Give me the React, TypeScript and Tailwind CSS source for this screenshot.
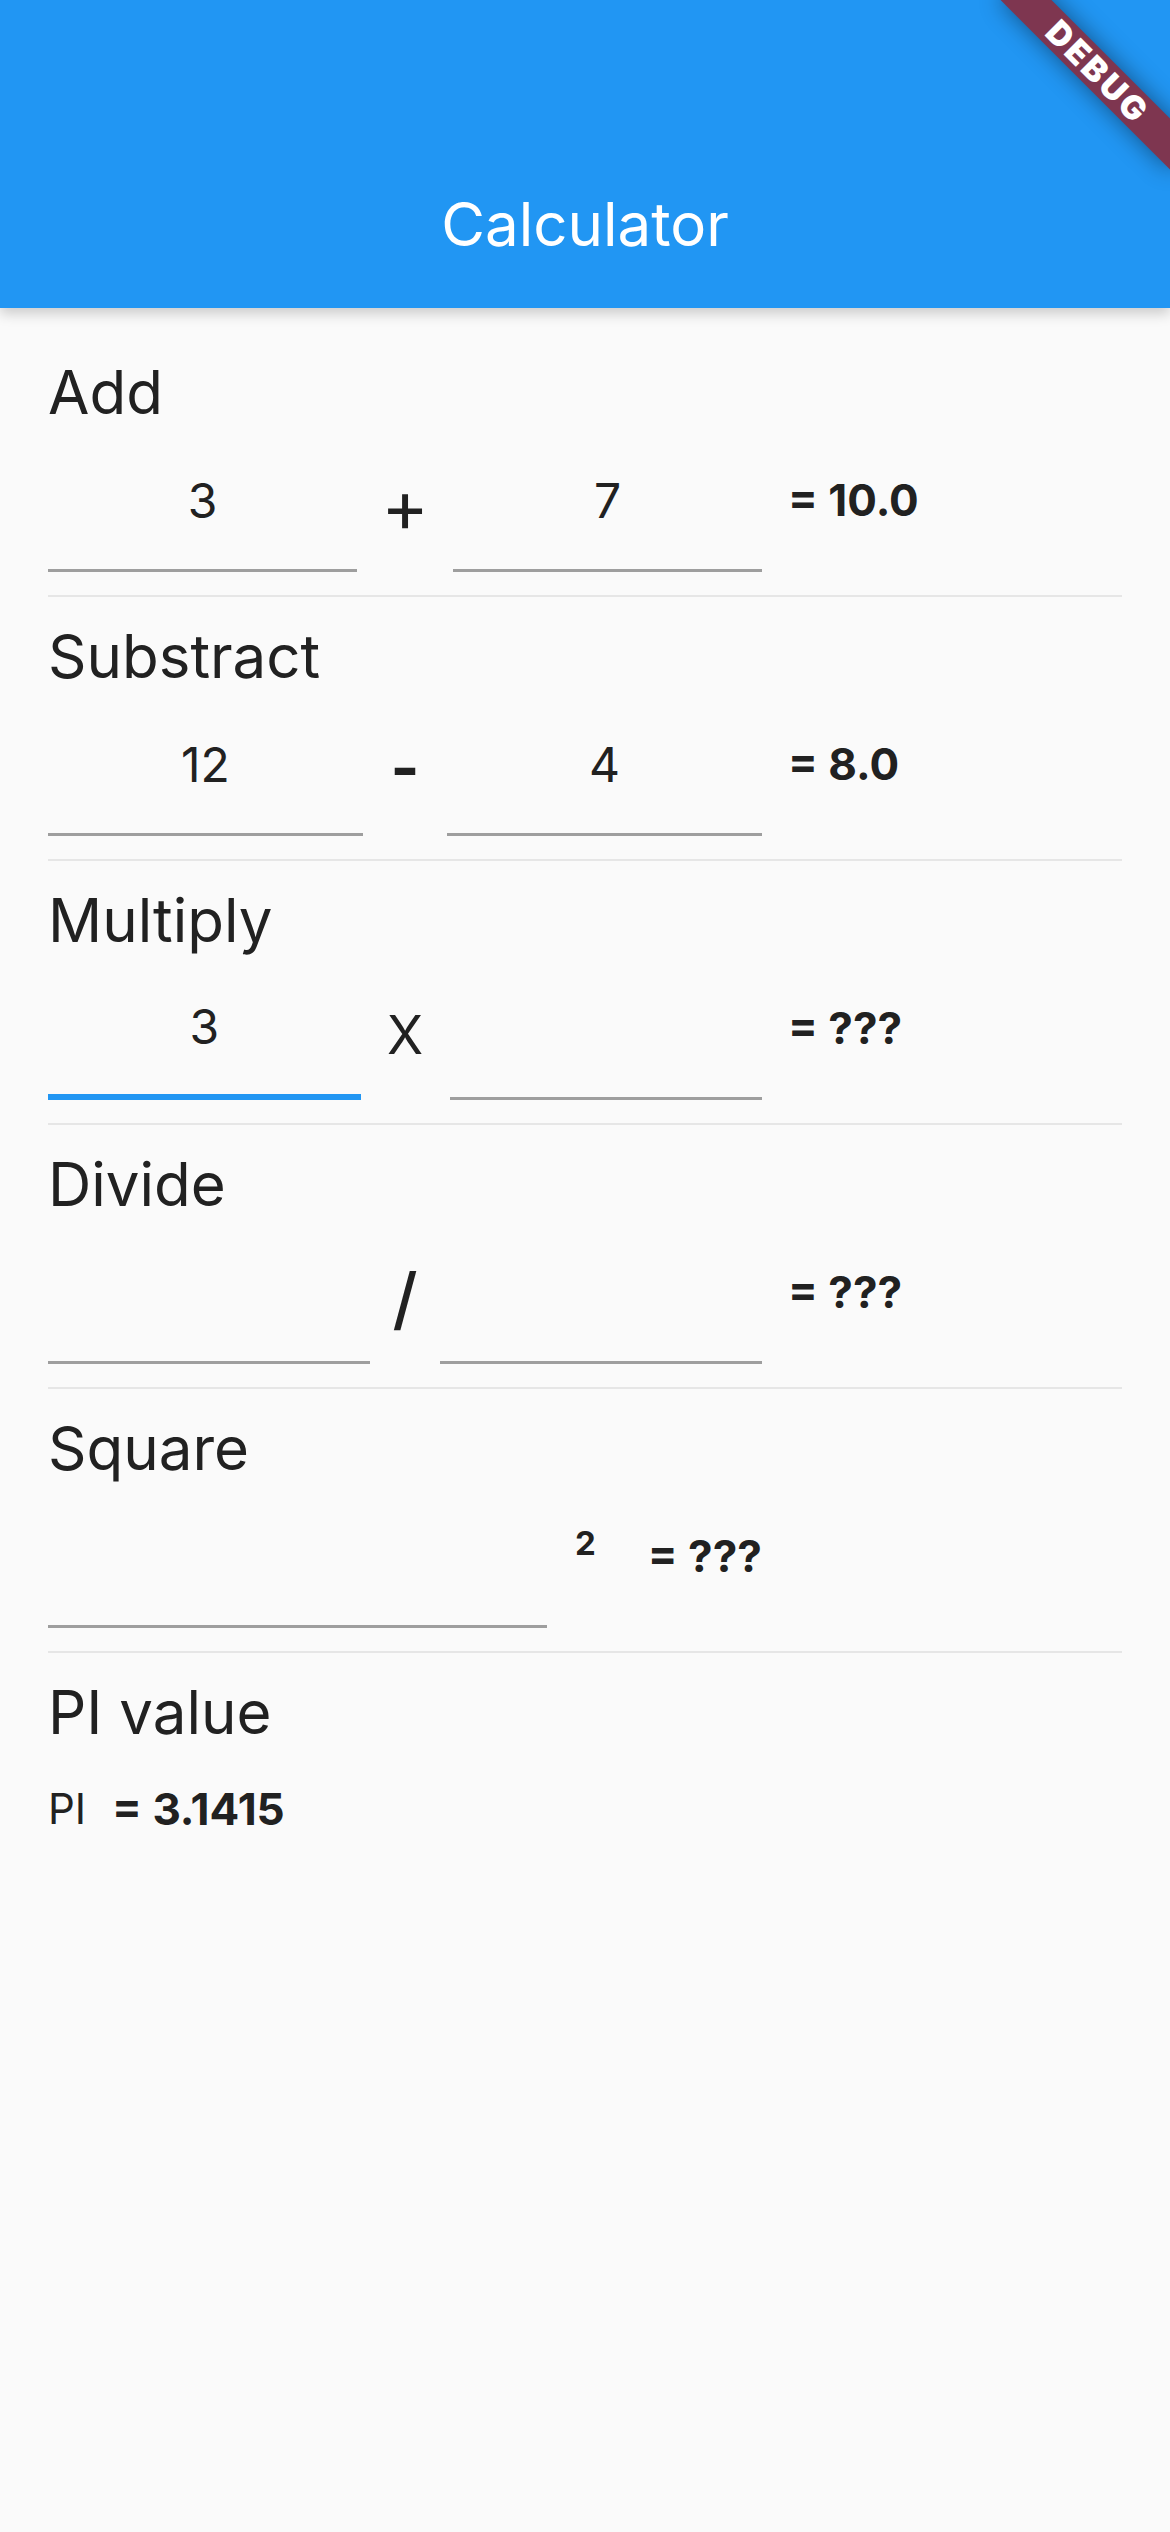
import React from 'react';

type FieldProps = { value?: string; focused?: boolean; className?: string };

const Field: React.FC<FieldProps> = ({ value = '', focused = false, className = 'flex-1' }) => (
    <div
        className={`${className} h-full flex items-center justify-center ${
            focused ? 'border-b-[6px] border-[#2196f3]' : 'border-b-[3px] border-[#9e9e9e]'
        }`}
    >
        <span className="text-[48px] leading-none text-[#212121] pt-[4px]">{value}</span>
    </div>
);

const Result: React.FC<{ text: string }> = ({ text }) => (
    <span className="text-[44px] leading-none font-bold text-[#212121] whitespace-pre">{text}</span>
);

const Section: React.FC<{ title: string; children: React.ReactNode; divider?: boolean }> = ({
    title,
    children,
    divider = true,
}) => (
    <section className="flex flex-col">
        <div className="h-[72px] flex items-center text-[60px] leading-none text-[#212121]">{title}</div>
        {children}
        {divider && (
            <div className="h-[48px] flex items-center">
                <div className="w-full h-[2px] bg-[#e6e6e6]"></div>
            </div>
        )}
    </section>
);

type OpRowProps = {
    a?: string;
    b?: string;
    op: string;
    opClass: string;
    result: string;
    focusA?: boolean;
};

const OpRow: React.FC<OpRowProps> = ({ a, b, op, opClass, result, focusA }) => (
    <div className="h-[144px] flex">
        <div className="w-[714px] h-full flex">
            <Field value={a} focused={focusA} />
            <div className={`${opClass} h-full flex items-center justify-center leading-none text-[#212121]`}>
                {op}
            </div>
            <Field value={b} />
        </div>
        <div className="flex-1 h-full flex items-center pl-[26px]">
            <Result text={result} />
        </div>
    </div>
);

export default function App() {
    return (
        <div className="relative w-[1170px] min-h-[2532px] bg-[#fafafa] overflow-hidden font-['Inter','Roboto',sans-serif]">
            {/* App bar */}
            <header className="relative z-10 h-[308px] bg-[#2196f3] flex flex-col justify-end shadow-[0_6px_12px_rgba(0,0,0,0.18)]">
                <div className="h-[168px] flex items-center justify-center text-white text-[60px] leading-none">
                    Calculator
                </div>
            </header>

            <main className="px-[48px] pt-[48px]">
                <Section title="Add">
                    <OpRow a="3" b="7" op="+" opClass="w-[96px] text-[72px] pt-[12px]" result="= 10.0" />
                </Section>
                <Section title="Substract">
                    <OpRow a="12" b="4" op="-" opClass="w-[84px] text-[62px] font-bold pt-[8px]" result="= 8.0" />
                </Section>
                <Section title="Multiply">
                    <OpRow a="3" op="X" opClass="w-[89px] text-[53px] pt-[14px]" result="= ???" focusA />
                </Section>
                <Section title="Divide">
                    <OpRow op="/" opClass="w-[70px] text-[68px] font-medium pt-[12px]" result="= ???" />
                </Section>
                <Section title="Square">
                    <div className="h-[144px] flex items-center">
                        <Field className="w-[499px]" />
                        <span className="ml-[28px] mb-[26px] text-[33px] leading-none font-bold text-[#212121]">2</span>
                        <span className="ml-[52px]">
                            <Result text="= ???" />
                        </span>
                    </div>
                </Section>
                <Section title="PI value" divider={false}>
                    <div className="h-[122px] flex items-center">
                        <span className="text-[42px] leading-none text-[#212121]">PI</span>
                        <span className="ml-[26px]">
                            <Result text="= 3.1415" />
                        </span>
                    </div>
                </Section>
            </main>

            {/* Debug banner */}
            <div className="absolute z-20 top-[54px] right-[-48px] w-[240px] h-[36px] rotate-45 bg-[#7e3650] shadow-[0_0_24px_rgba(0,0,0,0.45)] flex items-center justify-center">
                <span className="text-white text-[33px] leading-none font-black tracking-[3px]">DEBUG</span>
            </div>
        </div>
    );
}
